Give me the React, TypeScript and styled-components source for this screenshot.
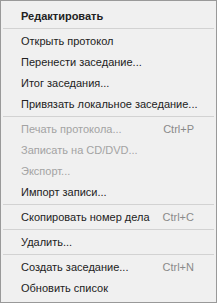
import React from 'react';
import styled, { createGlobalStyle } from 'styled-components';

const GlobalStyle = createGlobalStyle`
  html, body {
    margin: 0;
    padding: 0;
    background: #ffffff;
  }
  body {
    font-family: 'Liberation Sans', Arial, sans-serif;
  }
`;

const Menu = styled.div`
  box-sizing: border-box;
  width: 217px;
  height: 303px;
  background: #f0f0f0;
  border: 1px solid #999999;
  padding: 4px 0;
  display: flex;
  flex-direction: column;
`;

const Item = styled.div<{ $disabled?: boolean; $bold?: boolean }>`
  height: 21px;
  display: flex;
  align-items: center;
  justify-content: space-between;
  padding: 0 22px 0 20px;
  font-size: 11px;
  font-weight: ${(p) => (p.$bold ? 700 : 400)};
  color: ${(p) => (p.$disabled ? '#a3a3a3' : '#222222')};
  white-space: nowrap;
`;

const Shortcut = styled.span`
  color: #8a8a8a;
`;

const Separator = styled.div`
  height: 4px;
  display: flex;
  align-items: center;
  padding: 0 2px;
  &::after {
    content: '';
    flex: 1;
    height: 1px;
    background: #d2d2d2;
  }
`;

type Entry =
  | { kind: 'sep' }
  | { kind: 'item'; label: string; shortcut?: string; disabled?: boolean; bold?: boolean };

const entries: Entry[] = [
  { kind: 'item', label: 'Редактировать', bold: true },
  { kind: 'sep' },
  { kind: 'item', label: 'Открыть протокол' },
  { kind: 'item', label: 'Перенести заседание...' },
  { kind: 'item', label: 'Итог заседания...' },
  { kind: 'item', label: 'Привязать локальное заседание...' },
  { kind: 'sep' },
  { kind: 'item', label: 'Печать протокола...', shortcut: 'Ctrl+P', disabled: true },
  { kind: 'item', label: 'Записать на CD/DVD...', disabled: true },
  { kind: 'item', label: 'Экспорт...', disabled: true },
  { kind: 'item', label: 'Импорт записи...' },
  { kind: 'sep' },
  { kind: 'item', label: 'Скопировать номер дела', shortcut: 'Ctrl+C' },
  { kind: 'sep' },
  { kind: 'item', label: 'Удалить...' },
  { kind: 'sep' },
  { kind: 'item', label: 'Создать заседание...', shortcut: 'Ctrl+N' },
  { kind: 'item', label: 'Обновить список' },
];

export default function App() {
  return (
    <>
      <GlobalStyle />
      <Menu>
        {entries.map((e, i) =>
          e.kind === 'sep' ? (
            <Separator key={i} />
          ) : (
            <Item key={i} $disabled={e.disabled} $bold={e.bold}>
              <span>{e.label}</span>
              {e.shortcut && <Shortcut>{e.shortcut}</Shortcut>}
            </Item>
          )
        )}
      </Menu>
    </>
  );
}
